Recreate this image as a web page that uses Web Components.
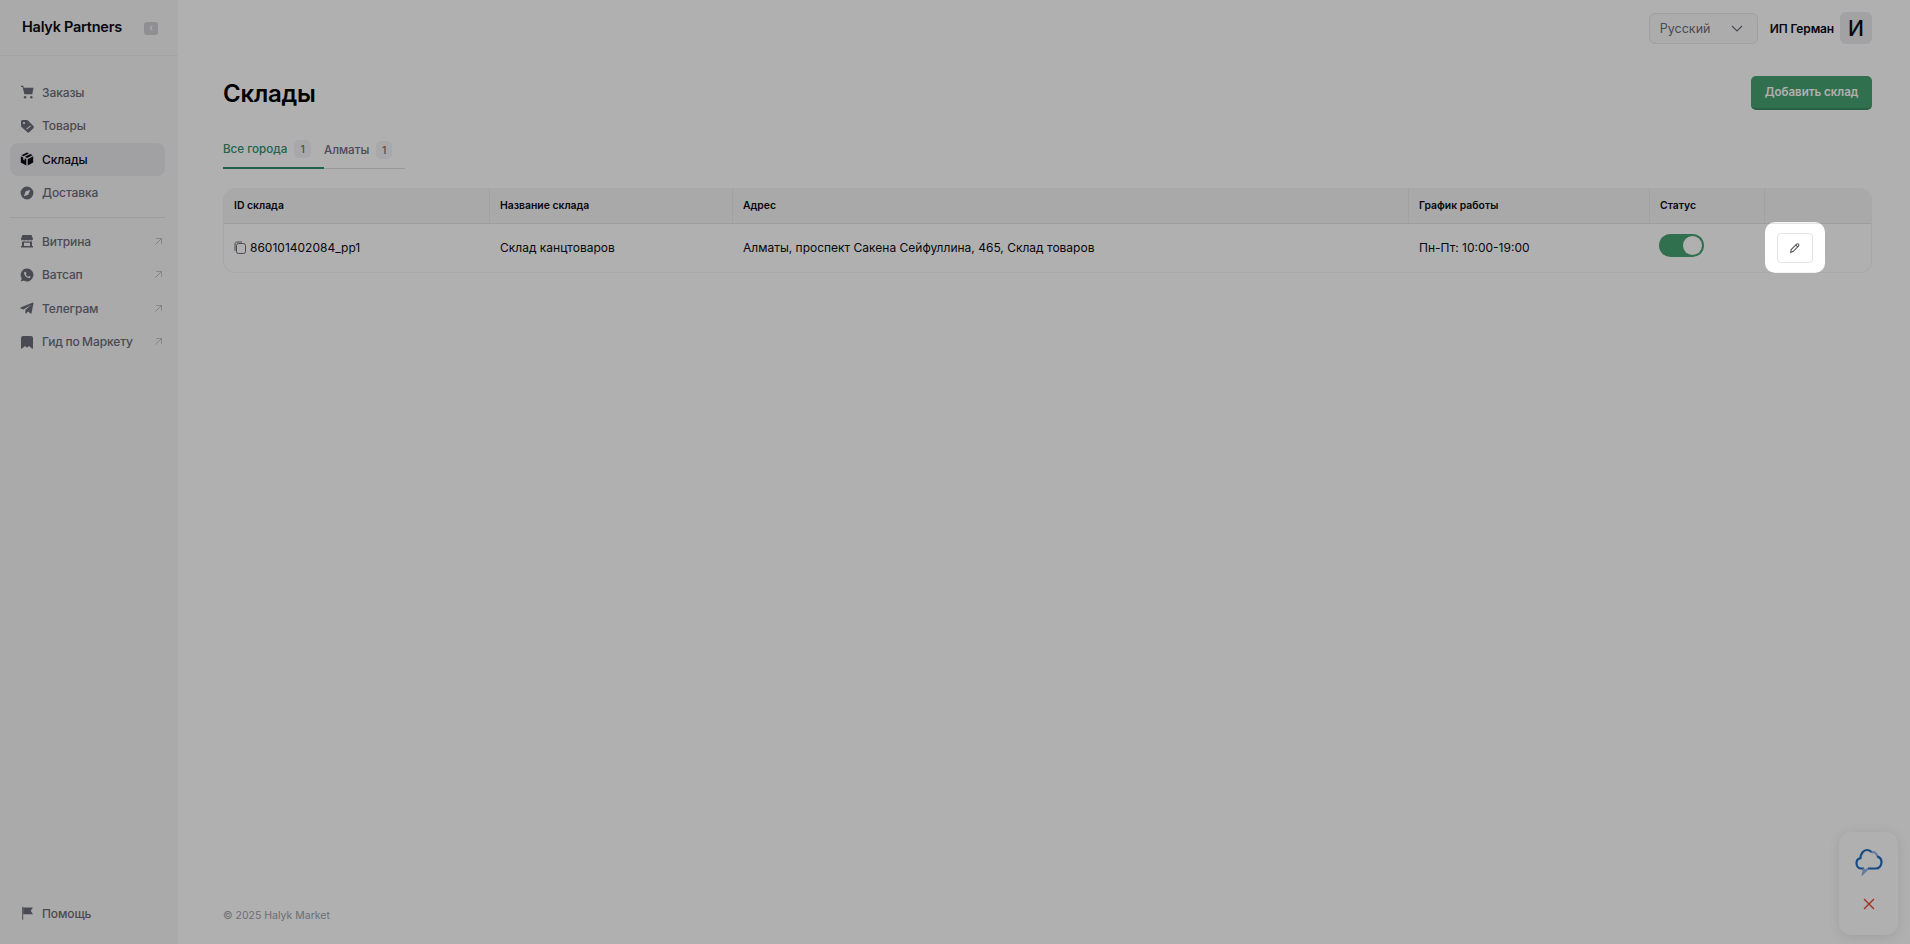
<!DOCTYPE html>
<html lang="ru">
<head>
<meta charset="utf-8">
<title>Склады</title>
<style>
  html, body { height: 100%; }
  body { margin: 0; display: flex; overflow: hidden; background: #fff; color: #0b0b14; font-family: Inter, "Noto Sans", sans-serif; }
</style>
</head>
<body>
<app-sidebar>
  <nav-item icon="cart" label="Заказы"></nav-item>
  <nav-item icon="tag" label="Товары"></nav-item>
  <nav-item icon="box" label="Склады" active></nav-item>
  <nav-item icon="compass" label="Доставка"></nav-item>
  <nav-item slot="links" icon="store" label="Витрина" external></nav-item>
  <nav-item slot="links" icon="whatsapp" label="Ватсап" external></nav-item>
  <nav-item slot="links" icon="telegram" label="Телеграм" external></nav-item>
  <nav-item slot="links" icon="bookmark" label="Гид по Маркету" external></nav-item>
  <nav-item slot="help" icon="flag" label="Помощь"></nav-item>
</app-sidebar>
<app-main>
  <top-bar></top-bar>
  <page-title></page-title>
  <city-tabs></city-tabs>
  <stock-table></stock-table>
</app-main>
<chat-widget></chat-widget>

<script>
const ICONS = {
  cart: '<path d="M1 .8h2.200l.6 2h9.700l-1.200 6.400H4.400L2.600 2H1z"/><circle cx="5" cy="12.200" r="1.200"/><circle cx="11.300" cy="12.200" r="1.200"/>',
  tag: '<path fill-rule="evenodd" d="M1 2.600C1 1.700 1.700 1 2.600 1h4.200c.5 0 .9.200 1.200.5l5.400 5.400c.7.700.7 1.700 0 2.300l-3.900 3.900c-.6.700-1.600.7-2.300 0L1.500 7.900C1.200 7.500 1 7.100 1 6.700zM4 3a1.100 1.100 0 1 0 0 2.200A1.100 1.100 0 0 0 4 3z"/><path d="M6.200 9.800l4-3.300.7.800-4 3.300z" fill="#f6f6f7"/>',
  box: '<path d="M7 .6l2 .9-5.600 2.700-2-1zM10.300 2l2.300 1.200L7 6 4.800 4.800zM.8 4.300l2.500 1.200v2.200l1.300.7V6.200L6.300 7v6.400L.8 10.600zM13.200 4.300v6.300l-5.500 2.800V7z"/>',
  compass: '<path fill-rule="evenodd" d="M7 .6a6.400 6.400 0 1 1 0 12.800A6.400 6.400 0 0 1 7 .6zm3.200 3.200L5.700 5.300 3.800 10.200l4.500-1.500z"/>',
  store: '<path d="M2.500 1h9l1.500 3.800c0 1-.9 1.700-1.900 1.700-.7 0-1.300-.3-1.700-.8-.4.500-1 .8-1.700.8s-1.300-.3-1.700-.8c-.4.500-1 .8-1.700.8s-1.300-.3-1.700-.8c-.4.500-1 .8-1.700.8C1.900 6.500 1 5.800 1 4.800z"/><path fill-rule="evenodd" d="M2 7.500h10V12h1v1.400H1V12h1zM4 8.800V12h6V8.800z"/>',
  whatsapp: '<path fill-rule="evenodd" d="M7 .6a6.400 6.400 0 1 1-3.100 12L.8 13.400l.9-3A6.400 6.400 0 0 1 7 .6zM5 3.700c-.3 0-.9.500-.9 1.400 0 2.400 2.600 5 5 5 .9 0 1.500-.7 1.500-1.100 0-.3-1.300-1.100-1.600-1-.3.100-.5.700-.8.700-.7 0-2.300-1.500-2.300-2.200 0-.3.600-.5.600-.8 0-.3-.7-2-1.500-2z"/>',
  telegram: '<path d="M13.500 1.200L.6 6.400c-.5.200-.5.800 0 1l2.900 1 7.600-4.700-5.700 5.400v3c0 .4.500.6.800.3l1.800-1.800 2.500 2c.4.300.9.100 1-.4l2-10c.1-.4-.3-.7-.6-.5z"/>',
  bookmark: '<path d="M3 1h8c1.100 0 2 .9 2 2v10.200c0 .5-.6.800-1 .4L9.500 11.500c-.3-.3-.8-.3-1.100 0L7 12.800l-1.400-1.300c-.3-.3-.8-.3-1.100 0L2 13.600c-.4.400-1 .1-1-.4V3c0-1.100.9-2 2-2z"/>',
  flag: '<path d="M2.200.8h1v13h-1z"/><path d="M3.200 1.500h9.800l-2.300 3.300 2.300 3.400H3.200z"/>'
};

class AppSidebar extends HTMLElement {
  constructor() {
    super();
    this.attachShadow({ mode: 'open' }).innerHTML = `
      <style>
        :host { display: flex; flex-direction: column; flex: 0 0 178px; height: 100vh; box-sizing: border-box; background: #f6f6f7; }
        .logo { display: flex; align-items: center; justify-content: space-between; height: 56px; padding: 0 20px 2px 22px; box-sizing: border-box; border-bottom: 1px solid #ecedee; font-size: 14.500px; font-weight: 600; letter-spacing: -.25px; color: #0b0b14; }
        .collapse { width: 14px; height: 13px; border-radius: 3px; background: #d0d0d4; color: #fff; font-size: 9px; line-height: 12px; text-align: center; margin-top: 3px; }
        .main { display: flex; flex-direction: column; padding: 19.600px 13px 0 10px; }
        hr { width: 100%; border: 0; border-top: 1px solid #e4e4e6; margin: 7px 0 7px; }
        .help { margin-top: auto; padding: 0 13px 14px 10px; }
      </style>
      <div class="logo"><span>Halyk Partners</span><span class="collapse">‹</span></div>
      <div class="main"><slot></slot><hr><slot name="links"></slot></div>
      <div class="help"><slot name="help"></slot></div>`;
  }
}

class NavItem extends HTMLElement {
  constructor() {
    super();
    const active = this.hasAttribute('active');
    this.attachShadow({ mode: 'open' }).innerHTML = `
      <style>
        :host { display: block; }
        .item { display: flex; align-items: center; height: 33.500px; padding: 0 3px 0 10px; border-radius: 8px; font-size: 12px; font-weight: 500; letter-spacing: -.1px; word-spacing: -.6px; color: ${active ? '#0b0b14' : '#6c6c7a'}; background: ${active ? '#e9e9ec' : 'transparent'}; }
        svg.icon { width: 14px; height: 14px; margin-right: 8px; fill: ${active ? '#0b0b14' : '#6c6c7a'}; flex: none; }
        span { flex: 1; white-space: nowrap; }
        svg.out { width: 7px; height: 7px; fill: none; stroke: #b6b6be; stroke-width: 1; }
      </style>
      <div class="item">
        <svg class="icon" viewBox="0 0 14 14">${ICONS[this.getAttribute('icon')]}</svg>
        <span>${this.getAttribute('label')}</span>
        ${this.hasAttribute('external') ? '<svg class="out" viewBox="0 0 8 8"><path d="M.5 7.500l7-7M1.500 .5h6v6"/></svg>' : ''}
      </div>`;
  }
}

class AppMain extends HTMLElement {
  constructor() {
    super();
    this.attachShadow({ mode: 'open' }).innerHTML = `
      <style>
        :host { display: flex; flex-direction: column; flex: 1; min-width: 0; height: 100vh; box-sizing: border-box; padding: 0 38px 0 45px; background: #ffffff; }
        footer { margin-top: auto; padding-bottom: 22px; font-size: 10.500px; color: #a0a0a8; }
      </style>
      <slot></slot>
      <footer>© 2025 Halyk Market</footer>`;
  }
}

class TopBar extends HTMLElement {
  constructor() {
    super();
    this.attachShadow({ mode: 'open' }).innerHTML = `
      <style>
        :host { display: flex; align-items: center; justify-content: flex-end; height: 32px; padding-top: 12px; }
        .lang { display: flex; align-items: center; justify-content: space-between; width: 109px; height: 31px; box-sizing: border-box; padding: 0 14px 0 10px; border: 1px solid #e6e6e8; border-radius: 6px; font-size: 12.500px; color: #6c6c7a; background: #fafafa; }
        .lang svg { width: 12px; height: 7px; fill: none; stroke: #6c6c7a; stroke-width: 1.200; }
        .name { margin-left: 12px; font-size: 12px; font-weight: 600; color: #0b0b14; letter-spacing: -.15px; white-space: nowrap; }
        .avatar { display: flex; align-items: center; justify-content: center; margin-left: 6px; width: 32px; height: 32px; border-radius: 6px; background: #ebebef; font-size: 21px; font-weight: 500; color: #0b0b14; }
      </style>
      <div class="lang"><span>Русский</span><svg viewBox="0 0 12 7"><path d="M1 1l5 5 5-5"/></svg></div>
      <div class="name">ИП Герман</div>
      <div class="avatar">И</div>`;
  }
}

class PageTitle extends HTMLElement {
  constructor() {
    super();
    this.attachShadow({ mode: 'open' }).innerHTML = `
      <style>
        :host { display: flex; align-items: center; justify-content: space-between; margin-top: 32px; height: 34px; }
        h1 { margin: 0; font-size: 24px; font-weight: 600; color: #000; letter-spacing: -.2px; }
        button { width: 121px; height: 34px; padding: 0; border: 0; border-radius: 5px; border-bottom: 2px solid #3e8c62; background: #48a272; color: #fff; font: 600 11.500px Inter, sans-serif; }
      </style>
      <h1>Склады</h1>
      <button>Добавить склад</button>`;
  }
}

class CityTabs extends HTMLElement {
  constructor() {
    super();
    this.attachShadow({ mode: 'open' }).innerHTML = `
      <style>
        :host { display: flex; width: 182px; margin-top: 24px; border-bottom: 1px solid #dcdcdf; font-size: 11.600px; font-weight: 500; color: #6c6c7a; }
        .tab { display: flex; align-items: center; gap: 7px; height: 35px; padding-bottom: 3px; box-sizing: border-box; margin-bottom: -1px; }
        .tab.on { width: 101px; color: #2f8d73; border-bottom: 2px solid #2f8d73; }
        .count { display: flex; align-items: center; justify-content: center; width: 16px; height: 18px; border-radius: 5px; background: #f4f4f6; font-size: 10.500px; color: #6c6c7a; }
        .tab.on .count { width: 17px; }
      </style>
      <div class="tab on">Все города <span class="count">1</span></div>
      <div class="tab">Алматы <span class="count">1</span></div>`;
  }
}

class StockTable extends HTMLElement {
  constructor() {
    super();
    const heads = ['ID склада', 'Название склада', 'Адрес', 'График работы', 'Статус', ''];
    this.attachShadow({ mode: 'open' }).innerHTML = `
      <style>
        :host { display: grid; grid-template-columns: 266px 243px 1fr 241px 115px 106px; margin-top: 19px; border-radius: 12px; border: 1px solid #f3f3f5; border-top: 0; box-sizing: border-box; font-size: 12px; color: #0b0b14; }
        .th { display: flex; align-items: center; height: 36px; box-sizing: border-box; padding: 0 10px; background: #f5f5f6; border-right: 1px solid #e9e9eb; border-bottom: 1px solid #e4e4e6; font-size: 10.400px; font-weight: 600; }
        .th.first { border-top-left-radius: 12px; }
        .th.last { border-top-right-radius: 12px; border-right: 0; }
        .td { display: flex; align-items: center; height: 48px; box-sizing: border-box; padding: 0 10px 1px; white-space: nowrap; position: relative; }
        .td.bare { padding-bottom: 0; }
        .copy { width: 12px; height: 13px; margin-right: 4px; fill: none; stroke: #6c6c7a; stroke-width: 1; }
        .switch { display: flex; justify-content: flex-end; width: 45px; height: 23px; margin: 0 0 5px -1px; box-sizing: border-box; padding: 2px; border-radius: 12px; background: #48a272; }
        .switch i { width: 19px; height: 19px; border-radius: 50%; background: #fff; }
        .edit { display: flex; align-items: center; justify-content: center; width: 36px; height: 30px; margin-left: 2px; border: 1px solid #e4e4e6; border-radius: 4px; box-sizing: border-box; background: #fff; }
        .edit svg { width: 12px; height: 12px; fill: none; stroke: #55555f; stroke-width: 1; }
        .hole { position: absolute; left: 0; top: -2px; width: 60px; height: 51px; border-radius: 10px; box-shadow: 0 0 0 3000px rgba(0,0,0,.31); z-index: 50; pointer-events: none; }
      </style>
      ${heads.map((h, i) => `<div class="th ${i == 0 ? 'first' : i == 5 ? 'last' : ''}">${h}</div>`).join('')}
      <div class="td"><svg class="copy" viewBox="0 0 12 13"><rect x="2.500" y="2.500" width="9" height="10" rx="2"/><path d="M1 10V3c0-1.200.800-2 2-2h5"/></svg>860101402084_pp1</div>
      <div class="td">Склад канцтоваров</div>
      <div class="td">Алматы, проспект Сакена Сейфуллина, 465, Склад товаров</div>
      <div class="td">Пн-Пт: 10:00-19:00</div>
      <div class="td bare"><div class="switch"><i></i></div></div>
      <div class="td bare"><div class="edit"><svg viewBox="0 0 11 11"><path d="M1.500 9.500l.5-2.500 5-5c.5-.5 1.200-.5 1.700 0s.5 1.200 0 1.700L3.700 8.800zM6.300 2.800l2 2"/></svg></div><div class="hole"></div></div>`;
  }
}

class ChatWidget extends HTMLElement {
  constructor() {
    super();
    this.attachShadow({ mode: 'open' }).innerHTML = `
      <style>
        :host { position: fixed; right: 12px; bottom: 9px; display: flex; flex-direction: column; align-items: center; width: 59px; height: 103px; box-sizing: border-box; padding-top: 16px; border-radius: 12px; background: #fff; box-shadow: 0 2px 12px rgba(0,0,0,.1); z-index: 10; }
        .cloud { width: 28px; height: 28px; fill: none; stroke-width: 2.200; }
        .close { width: 12px; height: 12px; margin-top: 22px; fill: none; stroke: #e8432a; stroke-width: 1.300; }
      </style>
      <svg class="cloud" viewBox="0 0 28 28">
        <path stroke="#1f6fc0" d="M9 20.500H6.500C3.500 20.500 1.500 18 1.500 15.200c0-2.600 1.800-4.700 4-5.100C5.700 6 8.200 2 12 2c2.200 0 3.800 1 4.800 2.400"/>
        <path stroke="#90b4e6" d="M16.800 4.400c2.500-.8 5 .8 5.300 4"/>
        <path stroke="#1f6fc0" d="M22.100 8.400c2.500.7 4.400 2.900 4.400 5.900 0 3.400-2.500 6.200-5.600 6.200H13"/>
        <path stroke="#90b4e6" d="M13 20.500l-5 5 1-5"/>
      </svg>
      <svg class="close" viewBox="0 0 12 12"><path d="M1 1l10 10M11 1L1 11"/></svg>`;
  }
}

customElements.define('app-sidebar', AppSidebar);
customElements.define('nav-item', NavItem);
customElements.define('app-main', AppMain);
customElements.define('top-bar', TopBar);
customElements.define('page-title', PageTitle);
customElements.define('city-tabs', CityTabs);
customElements.define('stock-table', StockTable);
customElements.define('chat-widget', ChatWidget);
</script>
</body>
</html>
